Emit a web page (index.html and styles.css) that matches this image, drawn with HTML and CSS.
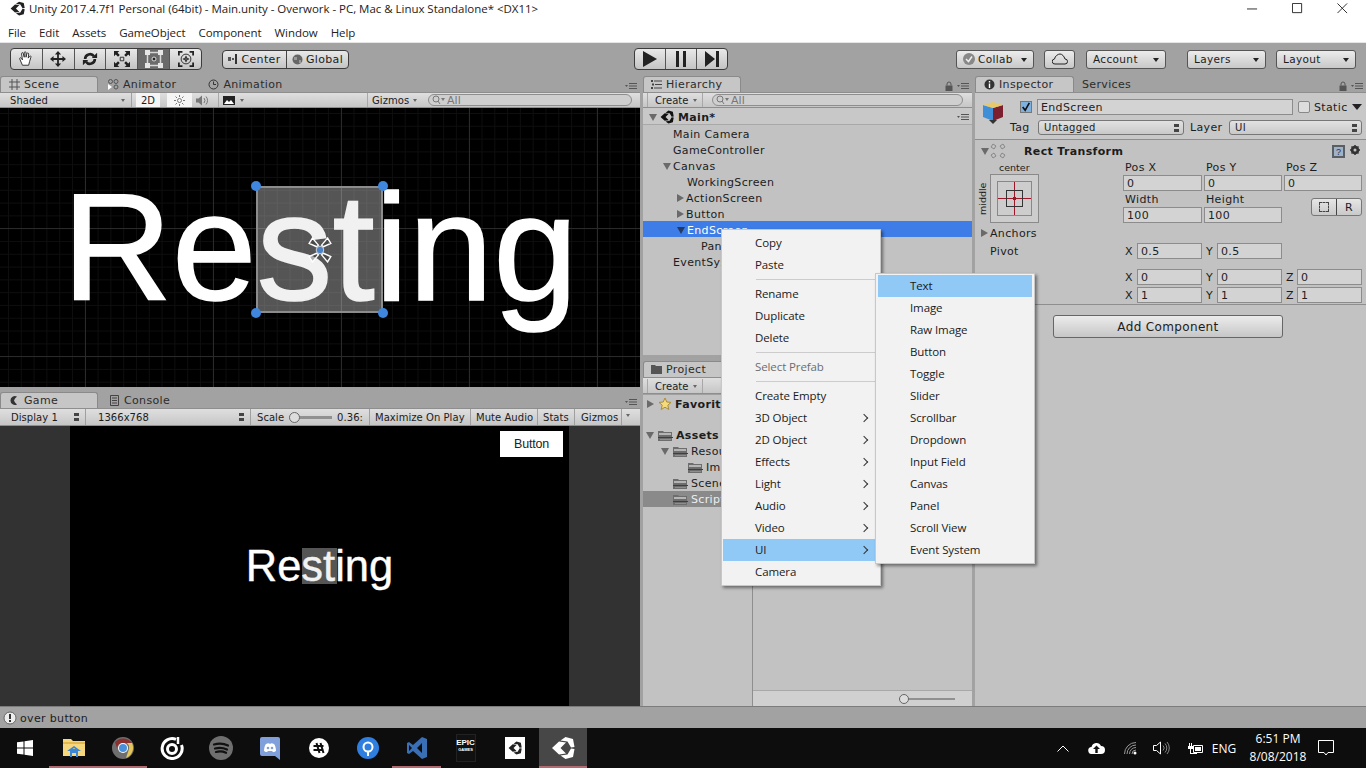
FILE: index.html
```html
<!DOCTYPE html>
<html lang="en">
<head>
<meta charset="utf-8">
<title>Unity</title>
<link rel="stylesheet" href="styles.css">
</head>
<body>
<svg class="defs" width="0" height="0" aria-hidden="true">
  <symbol id="unity" viewBox="0 0 24 24"><path fill="currentColor" d="M1 12 8 5.500 15 6.500 9.500 12 15 17.500 8 18.500ZM9.500 4.500 14.500 1 22 3 23.500 11 20 11.500 16.500 5.500ZM9.500 19.500 14.500 23 22 21 23.500 13 20 12.500 16.500 18.500Z"/></symbol>
  <symbol id="folder" viewBox="0 0 15 13"><path fill="#6d6d6d" d="M0 2h5l1 1h8v9H0z"/><path fill="#b5b5b5" d="M1 4h12v2H1z"/><path fill="#3f3f3f" d="M0 8h15v1H0z"/><path fill="#8e8e8e" d="M2 10h11v1H2z"/></symbol>
  <symbol id="menuopt" viewBox="0 0 12 8"><path fill="#555" d="M0 3h3L1.500 5zM4 1h8v1H4zM4 3.500h8v1H4zM4 6h8v1H4z"/></symbol>
  <symbol id="lock" viewBox="0 0 8 10"><path fill="none" stroke="#555" d="M2 4.500V3a2 2 0 0 1 4 0v1.500"/><path fill="#555" d="M.5 4.500h7V10h-7z"/></symbol>
  <symbol id="mag" viewBox="0 0 14 10"><circle cx="4" cy="4" r="3" fill="none" stroke="#777"/><path stroke="#777" d="M6 6l2 3"/><path fill="#777" d="M9 3h4l-2 3z"/></symbol>
</svg>

<div class="app">
  <header class="titlebar">
    <svg class="title-logo"><use href="#unity"/></svg>
    <span class="title-text">Unity 2017.4.7f1 Personal (64bit) - Main.unity - Overwork - PC, Mac &amp; Linux Standalone* &lt;DX11&gt;</span>
    <div class="winbtns">
      <svg viewBox="0 0 12 12"><path stroke="#222" d="M0 6.500h11"/></svg>
      <svg viewBox="0 0 12 12"><path fill="none" stroke="#222" d="M.5.500h10v10H.5z"/></svg>
      <svg viewBox="0 0 12 12"><path stroke="#222" d="M.5.500l10.500 10.500M11 .5L.5 11"/></svg>
    </div>
  </header>
  <nav class="menubar">
    <span>File</span><span>Edit</span><span>Assets</span><span>GameObject</span><span>Component</span><span>Window</span><span>Help</span>
  </nav>

  <div class="toolbar">
    <div class="btngroup tools">
      <button class="tool"><svg viewBox="0 0 18 18"><path fill="#fff" stroke="#222" d="M5 16 2 9c-.5-1.500 1-2 2-.5l1 1.500L4 3c0-1.500 2-1.500 2 0l1 4V2c0-1.500 2-1.500 2 0v5l1-4c.5-1.500 2-1 2 .5L11.500 8l1.500-2c1-1 2 0 1.500 1L13 12l-1 4z"/></svg></button>
      <button class="tool"><svg viewBox="0 0 18 18"><path fill="#222" d="M9 0l3.500 4H10v4h4V5.500L18 9l-4 3.500V10h-4v4h2.500L9 18l-3.500-4H8v-4H4v2.500L0 9l4-3.500V8h4V4H5.500z"/></svg></button>
      <button class="tool"><svg viewBox="0 0 18 18"><path fill="none" stroke="#222" stroke-width="3" d="M3.500 9a5.500 5.500 0 0 1 10-3M14.500 9a5.500 5.500 0 0 1-10 3"/><path fill="#222" d="M17 2v6h-6zM1 16v-6h6z"/></svg></button>
      <button class="tool"><svg viewBox="0 0 18 18"><path fill="#222" d="M0 0h6L4 2l2.500 2.500-2 2L2 4 0 6zM18 0v6l-2-2-2.500 2.500-2-2L14 2l-2-2zM0 18v-6l2 2 2.500-2.500 2 2L4 16l2 2zM18 18h-6l2-2-2.500-2.500 2-2L16 14l2-2z"/><path fill="none" stroke="#222" d="M7 7h4v4H7z"/></svg></button>
      <button class="tool is-on"><svg viewBox="0 0 18 18"><path fill="none" stroke="#d8d8d8" stroke-width="1.500" d="M2.500 2.500h13v13h-13z"/><path fill="#e6e6e6" d="M0 0h5v5H0zM13 0h5v5h-5zM0 13h5v5H0zM13 13h5v5h-5z"/><circle cx="9" cy="9" r="2" fill="#222" stroke="#ddd"/></svg></button>
      <button class="tool"><svg viewBox="0 0 18 18"><path fill="none" stroke="#222" stroke-width="2" d="M1 5V1h4M13 1h4v4M17 13v4h-4M5 17H1v-4"/><circle cx="9" cy="9" r="5.500" fill="none" stroke="#222"/><path fill="#222" d="M9 5l1.500 2.500h-1v1h1v-1L13 9l-2.500 1.500v-1h-1v1h1L9 13l-1.500-2.500h1v-1h-1v1L5 9l2.500-1.500v1h1v-1h-1z"/></svg></button>
    </div>
    <div class="btngroup pivot">
      <button class="seg seg-center"><svg class="ic9" viewBox="0 0 10 10"><path fill="#555" d="M0 3h3v4H0zM4 4h2v2H4z"/><path fill="#333" d="M7 0h2v10H7z"/></svg>Center</button>
      <button class="seg"><svg class="ic11" viewBox="0 0 11 11"><circle cx="5.500" cy="5.500" r="5" fill="#666"/><path fill="#999" d="M2 3h3v3H2zM7 6h2v3H7z"/></svg>Global</button>
    </div>
    <div class="btngroup play">
      <button class="pl"><svg viewBox="0 0 14 16"><path fill="#222" d="M0 0l14 8-14 8z"/></svg></button>
      <button class="pl"><svg viewBox="0 0 14 16"><path fill="#222" d="M2 0h3v16H2zM9 0h3v16H9z"/></svg></button>
      <button class="pl"><svg viewBox="0 0 14 16"><path fill="#222" d="M0 0l10 8-10 8zM11 0h3v16h-3z"/></svg></button>
    </div>
    <button class="dd collab"><svg class="ic12" viewBox="0 0 12 12"><circle cx="6" cy="6" r="6" fill="#888"/><path fill="none" stroke="#eee" stroke-width="1.500" d="M3 6l2.500 2.500L9 3.500"/></svg><span>Collab</span><i class="tri"></i></button>
    <button class="dd cloud"><svg viewBox="0 0 16 12"><path fill="none" stroke="#222" d="M4 11H3a2.500 2.500 0 0 1-.5-5C3 3 6 1 8 1s4 2 5 5a2.500 2.500 0 0 1 0 5z"/></svg></button>
    <button class="dd account"><span>Account</span><i class="tri"></i></button>
    <button class="dd layers"><span>Layers</span><i class="tri"></i></button>
    <button class="dd layout"><span>Layout</span><i class="tri"></i></button>
  </div>

  <main class="dock">
    <section class="col col-left">
      <div class="pane pane-scene">
        <div class="tabs">
          <div class="tab tab-on tab-scene"><svg class="ic11" viewBox="0 0 11 11"><path stroke="#555" d="M3 0v11M8 0v11M0 3h11M0 8h11"/></svg>Scene</div>
          <div class="tab tab-animator"><svg class="ic11" viewBox="0 0 11 11"><circle cx="2.500" cy="2.500" r="2" fill="none" stroke="#555"/><circle cx="8" cy="2.500" r="2" fill="none" stroke="#555"/><circle cx="8" cy="8" r="2" fill="none" stroke="#555"/><path fill="#fff" d="M0 5l4 3-4 3z"/></svg>Animator</div>
          <div class="tab tab-animation"><svg class="ic11" viewBox="0 0 11 11"><circle cx="5.500" cy="5.500" r="4.500" fill="none" stroke="#333"/><path fill="none" stroke="#333" d="M5.500 2.500v3h2.500"/></svg>Animation</div>
          <svg class="menuopt"><use href="#menuopt"/></svg>
        </div>
        <div class="bar">
          <div class="b b-shaded"><span>Shaded</span><i class="tri small"></i></div>
          <div class="b b-2d">2D</div>
          <div class="b b-sun"><svg viewBox="0 0 11 11"><circle cx="5.500" cy="5.500" r="2" fill="none" stroke="#777"/><path stroke="#777" d="M5.500 0v2M5.500 9v2M0 5.500h2M9 5.500h2M1.500 1.500l1.500 1.500M8 8l1.500 1.500M1.500 9.500L3 8M8 3l1.500-1.500"/></svg></div>
          <div class="b b-snd"><svg viewBox="0 0 14 11"><path fill="#777" d="M0 3.500h2.500L6 .5v10l-3.500-3H0z"/><path fill="none" stroke="#777" d="M8 3a4 4 0 0 1 0 5M10 1.500a6 6 0 0 1 0 8"/></svg></div>
          <div class="b b-img"><svg viewBox="0 0 12 9"><path fill="#222" d="M0 0h12v9H0z"/><path fill="#fff" d="M1 8l3-4 2 2 2-2 3 4z"/></svg><i class="tri small"></i></div>
          <div class="b b-giz"><span>Gizmos</span><i class="tri small"></i></div>
          <div class="search s-scene"><svg><use href="#mag"/></svg><span>All</span></div>
        </div>
        <div class="view scene-view">
          <div class="scene-text">Resting</div>
          <div class="sel-rect">
            <i class="dot d-tl"></i><i class="dot d-tr"></i><i class="dot d-bl"></i><i class="dot d-br"></i>
            <svg class="anchor-gizmo" viewBox="0 0 24 24"><g fill="#333" fill-opacity=".35" stroke="#fff" stroke-width="1.300"><path d="M9 9 2 6 5 1 10.500 7.500zM15 9l7-3-3-5-5.500 6.500zM9 15l-7 3 3 5 5.500-6.500zM15 15l7 3-3 5-5.500-6.500z"/></g><circle cx="12" cy="12" r="3.500" fill="#4a8fe0" fill-opacity=".8" stroke="#ddd" stroke-width=".8"/></svg>
          </div>
        </div>
      </div>
      <div class="pane pane-game">
        <div class="tabs">
          <div class="tab tab-on tab-game"><svg class="ic11" viewBox="0 0 11 11"><path fill="#333" d="M8 1.500A4.500 4.500 0 1 0 8 9.500L6 7.500 5 5.500 6 3.500z"/></svg>Game</div>
          <div class="tab tab-console"><svg class="ic11" viewBox="0 0 11 11"><path fill="none" stroke="#444" d="M1.500.5h8v10h-8z"/><path stroke="#444" d="M3 3h5M3 5.500h5M3 8h5"/></svg>Console</div>
          <svg class="menuopt"><use href="#menuopt"/></svg>
        </div>
        <div class="bar bar-game">
          <div class="b g-display"><span>Display 1</span><i class="updn"></i></div>
          <div class="b g-res"><span>1366x768</span><i class="updn"></i></div>
          <div class="b g-scale"><span>Scale</span><i class="slider"><i class="knob"></i></i><span>0.36:</span></div>
          <div class="b g-max">Maximize On Play</div>
          <div class="b g-mute">Mute Audio</div>
          <div class="b g-stats">Stats</div>
          <div class="b g-giz">Gizmos</div>
          <div class="b g-giz2"><i class="tri small"></i></div>
        </div>
        <div class="view game-view">
          <div class="game-stage">
            <div class="game-btn">Button</div>
            <div class="game-text">Resting</div>
            <div class="game-sel"></div>
          </div>
        </div>
      </div>
    </section>

    <section class="col col-mid">
      <div class="pane pane-hier">
        <div class="tabs">
          <div class="tab tab-on tab-hier"><svg class="ic11" viewBox="0 0 11 11"><path stroke="#444" d="M3 2h8M4 5.500h7M3 9h8"/><path fill="#444" d="M0 1h2v2H0zM1 4.500h2v2H1zM0 8h2v2H0z"/></svg>Hierarchy</div>
          <svg class="lock"><use href="#lock"/></svg>
          <svg class="menuopt mo-near"><use href="#menuopt"/></svg>
        </div>
        <div class="bar bar-mid">
          <div class="b b-create"><span>Create</span><i class="tri small"></i></div>
          <div class="search s-hier"><svg><use href="#mag"/></svg><span>All</span></div>
        </div>
        <div class="tree">
          <div class="row row-scene"><i class="arr down"></i><svg class="ic-unity"><use href="#unity"/></svg><b>Main*</b><svg class="menuopt mo-row"><use href="#menuopt"/></svg></div>
          <div class="row d1">Main Camera</div>
          <div class="row d1">GameController</div>
          <div class="row d1 has"><i class="arr down"></i>Canvas</div>
          <div class="row d2">WorkingScreen</div>
          <div class="row d2 has"><i class="arr right"></i>ActionScreen</div>
          <div class="row d2 has"><i class="arr right"></i>Button</div>
          <div class="row d2 has is-sel"><i class="arr down"></i>EndScreen</div>
          <div class="row d3">Panel</div>
          <div class="row d1">EventSystem</div>
        </div>
      </div>
      <div class="pane pane-proj">
        <div class="tabs">
          <div class="tab tab-on tab-proj"><svg class="ic11" viewBox="0 0 11 11"><path fill="#555" d="M0 1h4l1 1h6v8H0z"/></svg>Project</div>
        </div>
        <div class="bar bar-mid bar-proj">
          <div class="b b-create"><span>Create</span><i class="tri small"></i></div>
        </div>
        <div class="proj-body">
          <div class="proj-tree">
            <div class="prow p-fav"><i class="arr right"></i><svg class="star" viewBox="0 0 14 14"><path fill="#f5d97a" stroke="#a88d3a" d="M7 1l1.800 4 4.200.4-3.200 2.800 1 4.300L7 10.200 3.200 12.500l1-4.300L1 5.400 5.200 5z"/></svg><b>Favorites</b></div>
            <div class="prow p-assets"><i class="arr down"></i><svg class="fld"><use href="#folder"/></svg><b>Assets</b></div>
            <div class="prow p2"><i class="arr down"></i><svg class="fld"><use href="#folder"/></svg>Resources</div>
            <div class="prow p3"><svg class="fld"><use href="#folder"/></svg>Images</div>
            <div class="prow p2b"><svg class="fld"><use href="#folder"/></svg>Scenes</div>
            <div class="prow p2b is-gray"><svg class="fld"><use href="#folder"/></svg>Scripts</div>
          </div>
          <div class="proj-main">
            <div class="proj-foot"><i class="slider foot-slider"><i class="knob"></i></i></div>
          </div>
        </div>
      </div>
    </section>

    <section class="col col-right">
      <div class="tabs">
        <div class="tab tab-on tab-insp"><svg class="ic11" viewBox="0 0 11 11"><circle cx="5.500" cy="5.500" r="5" fill="#333"/><path fill="#fff" d="M4.800 2h1.400v1.500H4.800zM4.800 4.500h1.400V9H4.800z"/></svg>Inspector</div>
        <div class="tab tab-serv">Services</div>
        <svg class="lock"><use href="#lock"/></svg>
        <svg class="menuopt mo-near"><use href="#menuopt"/></svg>
      </div>
      <div class="insp">
        <div class="ihead">
          <svg class="cube" viewBox="0 0 22 24"><path fill="#3f8fd8" d="M1 5l10 3v13L1 17z"/><path fill="#7c1f2e" d="M11 8l10-3v12l-10 4z"/><path fill="#e6c96a" d="M1 5l10-3 10 3-10 3z"/><path fill="#333" d="M7 20h8l-4 4z"/></svg>
          <div class="ihead-rows">
            <div class="irow1">
              <span class="check"><svg viewBox="0 0 12 12"><path fill="none" stroke="#111" stroke-width="2" d="M2 6l3 4 5-9"/></svg></span>
              <div class="field name-field">EndScreen</div>
              <span class="box"></span><span class="static">Static</span><i class="tri big"></i>
            </div>
            <div class="irow2">
              <span class="lbl tag-lbl">Tag</span>
              <div class="sel tag-sel"><span>Untagged</span><i class="updn"></i></div>
              <span class="lbl layer-lbl">Layer</span>
              <div class="sel layer-sel"><span>UI</span><i class="updn"></i></div>
            </div>
          </div>
        </div>
        <div class="comp-head">
          <i class="arr down"></i>
          <svg class="rt-ic" viewBox="0 0 16 16"><path fill="none" stroke="#888" d="M1 4l2-3 3 2-2 3zM15 4l-2-3-3 2 2 3zM1 12l2 3 3-2-2-3zM15 12l-2 3-3-2 2-3z"/></svg>
          <b>Rect Transform</b>
          <svg class="help" viewBox="0 0 13 13"><path fill="#5a5f66" d="M0 0h13v13H0z"/><path fill="#9fb2c8" d="M2 2h9v9H2z"/><text x="4" y="10" font-size="9" fill="#234" font-family="Liberation Sans">?</text></svg>
          <svg class="gear" viewBox="0 0 12 12"><circle cx="5" cy="5" r="3" fill="none" stroke="#333" stroke-width="2.500"/><path stroke="#333" stroke-width="1.500" d="M5 0v10M0 5h10M1.500 1.500l7 7M8.500 1.500l-7 7"/><circle cx="5" cy="5" r="1.500" fill="#c2c2c2"/></svg>
        </div>
        <div class="xf">
          <div class="xf-center">center</div>
          <div class="xf-anchor">
            <span class="vert">middle</span>
            <div class="anchor-box"><div class="anchor-in"><i class="ah"></i><i class="av"></i><i class="ac"></i><i class="ad"></i></div></div>
          </div>
          <span class="cap c2 r1">Pos X</span><span class="cap c3 r1">Pos Y</span><span class="cap c4 r1">Pos Z</span>
          <div class="field c2 r2">0</div><div class="field c3 r2">0</div><div class="field c4 r2">0</div>
          <span class="cap c2 r3">Width</span><span class="cap c3 r3">Height</span>
          <div class="field c2 r4">100</div><div class="field c3 r4">100</div>
          <div class="rbtns c4 r34"><span class="rb"><i class="dash"></i></span><span class="rb">R</span></div>
          <div class="xf-left r5"><i class="arr right"></i>Anchors</div>
          <div class="xf-left lbl-pivot r6">Pivot</div>
          <div class="lf c2 r6"><span>X</span><div class="field">0.5</div></div>
          <div class="lf c3 r6"><span>Y</span><div class="field">0.5</div></div>
          <div class="lf c2 r8"><span>X</span><div class="field">0</div></div>
          <div class="lf c3 r8"><span>Y</span><div class="field">0</div></div>
          <div class="lf c4 r8"><span>Z</span><div class="field">0</div></div>
          <div class="lf c2 r10"><span>X</span><div class="field">1</div></div>
          <div class="lf c3 r10"><span>Y</span><div class="field">1</div></div>
          <div class="lf c4 r10"><span>Z</span><div class="field">1</div></div>
        </div>
        <div class="add-wrap"><button class="add">Add Component</button></div>
      </div>
    </section>
  </main>

  <footer class="status">
    <svg class="warn" viewBox="0 0 14 14"><circle cx="7" cy="7" r="6" fill="#eee" stroke="#666"/><path fill="#333" d="M6 3h2v5H6zM6 9h2v2H6z"/></svg>
    <span>over button</span>
  </footer>

  <div class="taskbar">
    <div class="tb"><svg class="i16" viewBox="0 0 16 16"><path fill="#fff" d="M0 2.300 6.500 1.400V7.500H0zM7.500 1.300 16 0V7.500H7.500zM0 8.500H6.500V14.600L0 13.700zM7.500 8.500H16V16L7.500 14.700z"/></svg></div>
    <div class="tb tb-run"><svg class="i22" viewBox="0 0 22 22"><path fill="#f6d77c" d="M0 2h8l2 2h12v15H0z"/><path fill="#e3b94e" d="M0 5h22v2H0z"/><path fill="#3b87d6" d="M7 12h8v8h-2v-4H9v4H7zM4 14l7-5 7 5h-3l-4-3-4 3z"/></svg></div>
    <div class="tb tb-run"><svg class="i22" viewBox="0 0 22 22"><circle cx="11" cy="11" r="11" fill="#6e6e6e"/><path fill="#8c2f2f" d="M3 5a11 11 0 0 1 17 1H11A6 6 0 0 0 5 11z"/><path fill="#e5c65a" d="M20 6a11 11 0 0 1-6 15l3-9a6 6 0 0 0-2-6z"/><circle cx="11" cy="11" r="5" fill="#fff"/><circle cx="11" cy="11" r="4" fill="#4a8fdc"/></svg></div>
    <div class="tb"><svg class="i24" viewBox="0 0 24 24"><path fill="none" stroke="#fff" stroke-width="3" d="M16 3.300A10 10 0 1 0 21.500 9"/><circle cx="12" cy="13" r="4.500" fill="none" stroke="#fff" stroke-width="3"/><path stroke="#fff" stroke-width="2.500" d="M18 1v7"/></svg></div>
    <div class="tb"><svg class="i24" viewBox="0 0 24 24"><circle cx="12" cy="12" r="12" fill="#6f6f6f"/><path fill="none" stroke="#111" stroke-width="2.200" stroke-linecap="round" d="M5 8.500c5-1.500 10-1 14 1M6 12.500c4-1 8-.8 12 1M7 16c3-.8 7-.6 10 .8"/></svg></div>
    <div class="tb"><svg class="i24" viewBox="0 0 20 24"><path fill="#7fa0da" d="M2 1h16a2 2 0 0 1 2 2v21l-5-4H2a2 2 0 0 1-2-2V3a2 2 0 0 1 2-2z"/><path fill="#fff" d="M4 15c0-3 1-6 2-7 2-1 3-1 4 0 1-1 2-1 4 0 1 1 2 4 2 7-1 1-3 1-3 1l-1-1H8l-1 1s-2 0-3-1z"/><circle cx="8" cy="12" r="1.300" fill="#7fa0da"/><circle cx="12" cy="12" r="1.300" fill="#7fa0da"/></svg></div>
    <div class="tb"><svg class="i20" viewBox="0 0 20 20"><circle cx="10" cy="10" r="10" fill="#fff"/><path fill="none" stroke="#111" stroke-width="2" d="M8 5l3 10M12 5l3 10M5 8h10M5 12h10" transform="translate(-.500 0)"/></svg></div>
    <div class="tb"><svg class="i22" viewBox="0 0 22 22"><circle cx="11" cy="11" r="11" fill="#2f7fe0"/><circle cx="11" cy="10" r="4.500" fill="none" stroke="#fff" stroke-width="2"/><path stroke="#fff" stroke-width="2" d="M11 14v5"/></svg></div>
    <div class="tb tb-run"><svg class="i24" viewBox="0 0 24 24"><path fill="#3a6fb5" d="M17 1l5 2v18l-5 2-9-8-4 3-2-1V7l2-1 4 3zM17 7l-5 5 5 5zM4 9v6l3-3z"/></svg></div>
    <div class="tb"><div class="epic"><span>EPIC</span><small>GAMES</small></div></div>
    <div class="tb"><div class="ubox"><svg><use href="#unity"/></svg></div></div>
    <div class="tb tb-sel"><svg class="i24 white"><use href="#unity"/></svg></div>
    <div class="tray">
      <svg class="t-caret" viewBox="0 0 12 7"><path fill="none" stroke="#fff" d="M.5 6.500 6 1l5.500 5.500"/></svg>
      <svg class="t-cloud" viewBox="0 0 17 12"><path fill="#fff" d="M4 12a3.500 3.500 0 0 1-.5-7A5 5 0 0 1 13 4a4 4 0 0 1 0 8z"/><path fill="#111" d="M8.500 3.500 12 7H9.700v4H7.300V7H5z"/></svg>
      <svg class="t-wifi" viewBox="0 0 13 13"><path fill="none" stroke="#999" d="M.5 12a11.500 11.500 0 0 1 11.500-11.500M3 12a9 9 0 0 1 9-9M5.500 12a6.500 6.500 0 0 1 6.500-6.500M8 12a4 4 0 0 1 4-4"/><circle cx="11" cy="11" r="1.500" fill="#fff"/></svg>
      <svg class="t-vol" viewBox="0 0 17 14"><path fill="none" stroke="#fff" d="M.5 4.500h3l4-3.500v12l-4-3.500h-3z"/><path fill="none" stroke="#888" d="M10 4.500a3.500 3.500 0 0 1 0 5M12 2.500a6.500 6.500 0 0 1 0 9M14 1a9 9 0 0 1 0 12"/></svg>
      <svg class="t-bat" viewBox="0 0 16 11"><path fill="#fff" d="M0 3h1V0h1v3h1V0h1v3h1v3H3v4h6v1H2V6H0z"/><path fill="none" stroke="#fff" d="M5.500 2.500h9v7h-9z"/><path fill="#fff" d="M7 4h6v4H7z"/></svg>
      <span class="t-eng">ENG</span>
      <div class="t-clock"><span>6:51 PM</span><span>8/08/2018</span></div>
      <svg class="t-note" viewBox="0 0 16 16"><path fill="none" stroke="#fff" d="M.5.500h15v12H10l-2 2.500-2-2.500H.5z"/></svg>
    </div>
  </div>

  <div class="menu ctx">
    <div class="mi">Copy</div><div class="mi">Paste</div>
    <hr>
    <div class="mi">Rename</div><div class="mi">Duplicate</div><div class="mi">Delete</div>
    <hr>
    <div class="mi dis">Select Prefab</div>
    <hr>
    <div class="mi">Create Empty</div>
    <div class="mi sub">3D Object</div><div class="mi sub">2D Object</div><div class="mi sub">Effects</div><div class="mi sub">Light</div><div class="mi sub">Audio</div><div class="mi sub">Video</div>
    <div class="mi sub hl">UI</div>
    <div class="mi">Camera</div>
  </div>
  <div class="menu submenu">
    <div class="mi hl">Text</div><div class="mi">Image</div><div class="mi">Raw Image</div><div class="mi">Button</div><div class="mi">Toggle</div><div class="mi">Slider</div><div class="mi">Scrollbar</div><div class="mi">Dropdown</div><div class="mi">Input Field</div><div class="mi">Canvas</div><div class="mi">Panel</div><div class="mi">Scroll View</div><div class="mi">Event System</div>
  </div>
</div>
</body>
</html>
```

FILE: styles.css
```css
* { box-sizing: border-box; }
html, body { margin: 0; padding: 0; }
body { width: 1366px; height: 768px; overflow: hidden; background: #a2a2a2; font-family: "DejaVu Sans", sans-serif; font-size: 10.5px; letter-spacing: .35px; color: #1c1c1c; }
.defs { position: absolute; }
button { font: inherit; letter-spacing: inherit; color: inherit; padding: 0; margin: 0; }
.app { position: relative; width: 1366px; height: 768px; display: flex; flex-direction: column; }

.titlebar { height: 22px; background: #fff; display: flex; align-items: center; padding: 0 0 6px 10px; font-family: "Open Sans", sans-serif; font-size: 11.5px; letter-spacing: -.03px; color: #222; }
.title-logo { width: 15px; height: 15px; color: #222; margin-right: 4px; }
.title-text { white-space: nowrap; }
.winbtns { margin-left: auto; display: flex; gap: 34px; padding-right: 18px; }
.winbtns svg { width: 11px; height: 11px; }

.menubar { height: 20px; background: #fff; display: flex; gap: 13px; align-items: center; padding: 1px 0 1px 8px; font-family: "Open Sans", sans-serif; font-size: 11.5px; letter-spacing: -.05px; color: #222; }

.toolbar { height: 34px; background: #a2a2a2; border-top: 1px solid #e6e6e6; display: flex; align-items: flex-start; padding: 5px 0 0 10px; }
.btngroup { display: flex; border: 1px solid #3c3c3c; border-radius: 4px; overflow: hidden; background: linear-gradient(#e9e9e9, #c4c4c4); }
.tools { width: 192px; height: 22px; }
.tool { flex: 1; border: 0; border-right: 1px solid #555; background: transparent; display: flex; align-items: center; justify-content: center; }
.tool:last-child { border-right: 0; }
.tool svg { width: 16px; height: 16px; }
.tool.is-on { background: #6b6b6b; }
.tool.is-on svg { width: 18px; height: 18px; }
.pivot { width: 127px; height: 19px; margin: 2px 0 0 20px; }
.seg { flex: 1; border: 0; background: transparent; display: flex; align-items: center; justify-content: center; gap: 3px; font-size: 11px; padding-bottom: 1px; }
.seg-center { flex: 0 0 64px; border-right: 1px solid #444; }
.ic9 { width: 10px; height: 10px; }
.ic11 { width: 11px; height: 11px; flex: none; }
.ic12 { width: 12px; height: 12px; }
.play { width: 94px; height: 22px; margin-left: 285px; }
.pl { flex: 1; border: 0; border-right: 1px solid #555; background: transparent; display: flex; align-items: center; justify-content: center; }
.pl:last-child { border-right: 0; }
.pl svg { width: 14px; height: 16px; }
.dd { height: 19px; margin-top: 2px; border: 1px solid #555; border-radius: 3px; background: linear-gradient(#ececec, #c8c8c8); display: flex; align-items: center; padding: 0 6px 2px; font-size: 10.5px; }
.dd .tri { margin-left: auto; margin-top: 2px; }
.collab { width: 78px; margin-left: 228px; gap: 3px; }
.cloud { width: 31px; margin-left: 10px; justify-content: center; }
.cloud svg { width: 16px; height: 12px; }
.account { width: 80px; margin-left: 11px; }
.layers { width: 79px; margin-left: 21px; }
.layout { width: 80px; margin-left: 10px; }
.tri { display: inline-block; width: 0; height: 0; border-left: 3px solid transparent; border-right: 3px solid transparent; border-top: 4px solid #222; }
.tri.small { border-left-width: 2px; border-right-width: 2px; border-top: 3px solid #666; }
.tri.big { border-left-width: 5px; border-right-width: 5px; border-top: 6px solid #222; }

.dock { flex: none; height: 630px; display: grid; grid-template-columns: 640px 330px 392px; column-gap: 2px; }
.col { display: flex; flex-direction: column; min-width: 0; }
.col-left { gap: 5px; }
.col-mid { gap: 6px; padding-left: 1px; }
.pane { display: flex; flex-direction: column; min-height: 0; }
.pane-scene { height: 311px; }
.pane-game { flex: 1; }
.pane-hier { height: 279px; }
.pane-proj { flex: 1; }

.tabs { height: 16px; flex: none; display: flex; align-items: flex-end; position: relative; font-size: 11px; }
.tab { height: 16px; display: flex; align-items: center; gap: 4px; white-space: nowrap; color: #2c2c2c; }
.tab-on { background: #c6c6c6; border-radius: 3px 3px 0 0; border: 1px solid #8a8a8a; border-bottom: 0; }
.tab-scene { width: 98px; padding-left: 8px; }
.tab-animator { margin-left: 10px; }
.tab-animation { margin-left: 32px; }
.tab-game { width: 98px; padding-left: 8px; }
.tab-console { margin-left: 11px; }
.tab-hier { width: 98px; padding-left: 7px; }
.tab-proj { width: 98px; padding-left: 7px; }
.tab-insp { width: 99px; padding-left: 8px; }
.tab-serv { margin-left: 8px; }
.menuopt { width: 12px; height: 8px; margin: 0 3px 2px auto; }
.lock { width: 8px; height: 10px; margin: 0 0 1px auto; }
.mo-near { margin-left: 4px; }
.mo-row { margin: 0 3px 0 auto; }

.bar { height: 16px; flex: none; display: flex; align-items: stretch; background: linear-gradient(#dfdfdf, #c6c6c6); border-top: 1px solid #8e8e8e; border-bottom: 1px solid #8e8e8e; font-size: 10px; letter-spacing: .05px; }
.bar-game { height: 18px; }
.bar-proj { height: 17px; padding-top: 1px; }
.b { display: flex; align-items: center; white-space: nowrap; flex: none; padding: 0 6px; }
.b-shaded { width: 128px; margin-left: 4px; border-right: 1px solid #a0a0a0; justify-content: space-between; }
.b-2d { width: 24px; margin-left: 4px; background: #f5f5f5; justify-content: center; padding: 0; }
.b-sun { width: 25px; margin-left: 7px; background: #f5f5f5; justify-content: center; padding: 0; }
.b-sun svg { width: 11px; height: 11px; }
.b-snd { width: 26px; padding: 0 0 0 4px; }
.b-snd svg { width: 14px; height: 11px; }
.b-img { width: 34px; gap: 5px; margin-left: 0; padding: 0 0 0 4px; border-left: 1px solid #a8a8a8; }
.b-img svg { width: 12px; height: 9px; }
.b-giz { width: 44px; margin-left: 115px; padding: 0 0 0 4px; gap: 4px; border-left: 1px solid #a8a8a8; }
.search { display: flex; align-items: center; background: #cfcfcf; border: 1px solid #8e8e8e; border-radius: 7px; height: 12px; margin-top: 1px; font-size: 11px; color: #777; padding-left: 3px; gap: 1px; }
.search svg { width: 14px; height: 10px; }
.s-scene { width: 204px; margin-left: 17px; }
.s-hier { width: 251px; margin-left: 9px; }
.g-display { width: 81px; margin-left: 5px; justify-content: space-between; border-right: 1px solid #9f9f9f; }
.g-res { width: 165px; padding-left: 12px; justify-content: space-between; border-right: 1px solid #9f9f9f; }
.g-scale { width: 119px; gap: 5px; border-right: 1px solid #9f9f9f; }
.g-max { width: 101px; padding: 0 0 0 5px; border-right: 1px solid #9f9f9f; }
.g-mute { width: 67px; padding: 0 0 0 5px; border-right: 1px solid #9f9f9f; }
.g-stats { width: 37px; padding: 0 0 0 5px; border-right: 1px solid #9f9f9f; }
.g-giz { width: 47px; padding: 0 0 0 6px; border-right: 1px solid #9f9f9f; }
.g-giz2 { width: 14px; padding: 0 0 4px 4px; }
.updn { display: inline-block; width: 5px; height: 8px; background: linear-gradient(#444 0 3px, transparent 3px 5px, #444 5px 8px); }
.slider { display: block; width: 43px; height: 3px; background: #909090; position: relative; }
.knob { position: absolute; left: 0; top: -4px; width: 11px; height: 11px; border-radius: 50%; background: #ddd; border: 1px solid #666; }

.view { flex: 1; min-height: 0; overflow: hidden; }
.scene-view { position: relative; background-color: #000;
  background-image:
    linear-gradient(90deg, #2a2a2a 1px, transparent 1px),
    linear-gradient(#2a2a2a 1px, transparent 1px),
    linear-gradient(90deg, #0e0e0e 1px, transparent 1px),
    linear-gradient(#0e0e0e 1px, transparent 1px);
  background-size: 128px 128px, 128px 128px, 12.8px 12.8px, 12.8px 12.8px;
  background-position: 85px 0, 0 120px, 8px 0, 0 5px;
  display: flex; align-items: center; justify-content: center; }
.scene-text { font-family: "Liberation Sans", sans-serif; font-size: 152px; letter-spacing: 0; line-height: 1; color: #fff; padding-bottom: 2px; -webkit-text-stroke: 1.5px #fff; }
.sel-rect { position: absolute; left: 256px; top: 78px; width: 127px; height: 127px; background: rgba(218,218,218,.39); border: 2px solid #8c8c8c; }
.dot { position: absolute; width: 10px; height: 10px; border-radius: 50%; background: #3f86de; }
.d-tl { left: -7px; top: -7px; } .d-tr { right: -7px; top: -7px; } .d-bl { left: -7px; bottom: -7px; } .d-br { right: -7px; bottom: -7px; }
.anchor-gizmo { position: absolute; left: 49px; top: 49px; width: 26px; height: 26px; }
.game-view { background: #323232; padding: 0 70px; }
.game-stage { position: relative; width: 499px; height: 100%; background: #000; display: flex; align-items: center; justify-content: center; }
.game-btn { position: absolute; right: 6px; top: 5px; width: 63px; height: 26px; background: #fff; color: #222; display: flex; align-items: center; justify-content: center; font-family: "Liberation Sans", sans-serif; font-size: 12.5px; letter-spacing: -.2px; }
.game-text { font-family: "Liberation Sans", sans-serif; font-size: 43.5px; letter-spacing: 0; line-height: 1; color: #fff; padding-top: 1px; -webkit-text-stroke: .4px #fff; }
.game-sel { position: absolute; left: 232px; top: 122px; width: 35px; height: 36px; background: rgba(218,218,218,.39); }

.bar-mid { font-size: 10px; }
.b-create { width: 56px; margin-left: 4px; gap: 4px; padding: 0 0 0 7px; border-left: 1px solid #a8a8a8; border-right: 1px solid #a8a8a8; }
.tree { flex: 1; background: #c2c2c2; font-size: 11px; }
.row { height: 16px; display: flex; align-items: center; white-space: nowrap; padding-top: 2px; }
.row-scene { height: 17px; background: #c8c8c8; border-bottom: 1px solid #a8a8a8; padding: 2px 0 0 6px; font-size: 11px; gap: 3px; }
.row-scene b { font-weight: 700; }
.ic-unity { width: 14px; height: 14px; color: #111; margin-right: 1px; }
.d1 { padding-left: 30px; }
.d2 { padding-left: 44px; }
.d3 { padding-left: 58px; }
.has .arr { margin-left: -10px; margin-right: 2px; }
.arr { display: inline-block; flex: none; width: 0; height: 0; }
.arr.down { border-left: 4px solid transparent; border-right: 4px solid transparent; border-top: 7px solid #6a6a6a; }
.arr.right { border-top: 4px solid transparent; border-bottom: 4px solid transparent; border-left: 7px solid #6a6a6a; }
.is-sel { background: #3e7de7; color: #fff; }
.is-sel .arr.down { border-top-color: #223a66; }

.proj-body { flex: 1; display: flex; background: #c2c2c2; min-height: 0; border-top: 1px solid #a0a0a0; }
.proj-tree { width: 110px; border-right: 1px solid #8e8e8e; padding-top: 1px; font-size: 11px; flex: none; }
.prow { height: 16px; display: flex; align-items: center; gap: 3px; white-space: nowrap; }
.prow i { margin-right: 1px; }
.p-fav { padding-left: 4px; margin-bottom: 15px; }
.p-assets { padding-left: 3px; }
.p2 { padding-left: 18px; }
.p3 { padding-left: 45px; }
.p2b { padding-left: 30px; }
.star { width: 14px; height: 14px; }
.fld { width: 15px; height: 13px; flex: none; }
.is-gray { background: #8a8a8a; color: #eee; }
.proj-main { flex: 1; display: flex; flex-direction: column; justify-content: flex-end; }
.proj-foot { height: 16px; background: #d0d0d0; border-top: 1px solid #a8a8a8; display: flex; align-items: center; padding-left: 146px; }
.foot-slider { width: 56px; height: 2px; }
.foot-slider .knob { top: -4px; width: 10px; height: 10px; }

.col-right { padding-left: 1px; }
.insp { flex: 1; background: #c2c2c2; font-size: 11px; }
.ihead { height: 48px; border-bottom: 1px solid #8e8e8e; display: flex; padding: 6px 0 0 7px; border-top: 1px solid #8e8e8e; background: #c8c8c8; }
.cube { width: 22px; height: 24px; flex: none; margin-top: 1px; }
.ihead-rows { flex: 1; display: flex; flex-direction: column; gap: 5px; }
.irow1 { display: flex; align-items: center; height: 16px; }
.check { width: 12px; height: 12px; margin-left: 16px; background: #7fb1e0; border: 1px solid #777; display: flex; }
.check svg { width: 10px; height: 10px; }
.name-field { width: 256px; margin-left: 5px; }
.field { height: 16px; background: #d3d3d3; border: 1px solid #8c8c8c; display: flex; align-items: center; padding-left: 3px; white-space: nowrap; min-width: 0; color: #222; }
.box { width: 12px; height: 12px; background: #ddd; border: 1px solid #888; border-radius: 2px; margin-left: 5px; }
.static { margin-left: 4px; }
.irow1 .tri.big { margin-left: 4px; }
.irow2 { display: flex; align-items: center; height: 15px; }
.lbl { flex: none; }
.tag-lbl { margin-left: 6px; width: 28px; }
.sel { height: 15px; border: 1px solid #777; border-radius: 3px; background: linear-gradient(#e2e2e2, #c9c9c9); display: flex; align-items: center; justify-content: space-between; padding: 0 4px 0 5px; font-size: 10px; }
.tag-sel { width: 146px; }
.layer-lbl { margin-left: 6px; width: 39px; }
.layer-sel { width: 133px; }
.comp-head { height: 20px; display: flex; align-items: center; padding: 2px 0 0 6px; }
.rt-ic { width: 16px; height: 16px; margin-left: 1px; }
.comp-head b { margin-left: 18px; font-weight: 700; }
.help { width: 13px; height: 13px; margin-left: auto; }
.gear { width: 12px; height: 12px; margin: 0 4px 0 5px; }
.xf { display: grid; grid-template-columns: 146px 79px 78px 78px; grid-template-rows: 15px 16px 16px 16px 20px 16px 10px 16px 2px 16px; column-gap: 2px; height: 145px; border-bottom: 1px solid #8e8e8e; }
.c2 { grid-column: 2; } .c3 { grid-column: 3; } .c4 { grid-column: 4; }
.r1 { grid-row: 1; } .r2 { grid-row: 2; } .r3 { grid-row: 3; } .r4 { grid-row: 4; } .r34 { grid-row: 3 / 5; }
.r5 { grid-row: 5; } .r6 { grid-row: 6; } .r8 { grid-row: 8; } .r10 { grid-row: 10; }
.cap { display: flex; align-items: center; padding-left: 2px; }
.xf-center { grid-column: 1; grid-row: 1; padding-left: 24px; font-size: 9.5px; letter-spacing: 0; display: flex; align-items: center; }
.xf-anchor { grid-column: 1; grid-row: 2 / 5; display: flex; padding-left: 2px; margin-top: -1px; }
.vert { writing-mode: vertical-rl; transform: rotate(180deg); font-size: 9.5px; letter-spacing: 0; width: 13px; text-align: center; }
.anchor-box { width: 49px; height: 49px; background: #cdcdcd; border: 1px solid #8a8a8a; padding: 6px; }
.anchor-in { position: relative; width: 35px; height: 35px; border: 1px solid #888; }
.ah { position: absolute; left: 0; right: 0; top: 16px; height: 1px; background: #a01428; }
.av { position: absolute; top: 0; bottom: 0; left: 16px; width: 1px; background: #a01428; }
.ac { position: absolute; left: 8px; top: 8px; width: 17px; height: 17px; border: 1px solid #333; }
.ad { position: absolute; left: 15px; top: 15px; width: 3px; height: 3px; background: #8a1e2c; }
.xf-left { grid-column: 1; padding-left: 6px; display: flex; align-items: center; gap: 2px; }
.lbl-pivot { padding-left: 15px; }
.lf { display: flex; align-items: center; justify-content: space-between; }
.lf span { padding-left: 2px; }
.lf .field { width: 65px; }
.rbtns { display: flex; justify-self: end; align-self: center; width: 51px; height: 18px; margin-right: 0; border: 1px solid #777; border-radius: 3px; background: linear-gradient(#e6e6e6, #c9c9c9); }
.rb { flex: 1; display: flex; align-items: center; justify-content: center; }
.rb:first-child { border-right: 1px solid #444; }
.dash { width: 10px; height: 10px; border: 1px dashed #444; display: block; }
.add-wrap { padding: 10px 0 0 78px; }
.add { width: 230px; height: 23px; border: 1px solid #666; border-radius: 3px; background: linear-gradient(#ececec, #c6c6c6); font-size: 12px; }

.status { height: 22px; flex: none; background: #a2a2a2; border-top: 1px solid #7c7c7c; display: flex; align-items: center; gap: 3px; padding: 1px 0 0 3px; font-size: 11px; }
.warn { width: 14px; height: 14px; }

.taskbar { flex: 1; background: #0d0d0d; display: flex; color: #fff; letter-spacing: 0; font-family: "Open Sans", sans-serif; font-size: 12px; }
.tb { width: 49px; flex: none; display: flex; align-items: center; justify-content: center; border-bottom: 2px solid transparent; border-top: 2px solid transparent; }
.tb-run { border-bottom-color: #b06a70; }
.tb-sel { background: #474747; border-bottom-color: #b06a70; width: 48px; }
.i16 { width: 16px; height: 16px; }
.i20 { width: 20px; height: 20px; }
.i22 { width: 22px; height: 22px; }
.i24 { width: 24px; height: 24px; }
.white { color: #fff; }
.epic { width: 20px; height: 28px; padding-top: 3px; background: #111; border: 1px solid #222; display: flex; flex-direction: column; align-items: center; font-family: "Liberation Sans", sans-serif; font-weight: 700; font-size: 8px; line-height: 9px; color: #fff; }
.epic small { font-size: 4px; line-height: 6px; }
.ubox { width: 20px; height: 22px; background: #fff; color: #222; display: flex; align-items: center; justify-content: center; }
.ubox svg { width: 14px; height: 14px; }
.tray { display: flex; align-items: center; flex: 1; min-width: 0; padding-left: 470px; }
.t-caret { width: 12px; height: 7px; }
.t-cloud { width: 17px; height: 12px; margin-left: 19px; }
.t-wifi { width: 13px; height: 13px; margin-left: 19px; }
.t-vol { width: 17px; height: 14px; margin-left: 16px; }
.t-bat { width: 16px; height: 11px; margin-left: 18px; }
.t-eng { margin-left: 5px; width: 30px; text-align: center; }
.t-clock { display: flex; flex-direction: column; align-items: center; width: 76px; margin-left: 1px; line-height: 18px; }
.t-note { width: 16px; height: 16px; margin-left: 2px; }

.menu { position: absolute; background: #f2f2f2; border: 1px solid #c8c8c8; box-shadow: 2px 2px 3px rgba(0,0,0,.45); font-family: "Open Sans", sans-serif; font-size: 11.5px; letter-spacing: -.1px; color: #1a1a1a; }
.ctx { left: 721px; top: 229px; width: 160px; height: 357px; padding: 2px 5px 0 1px; }
.submenu { left: 875px; top: 273px; width: 160px; height: 291px; padding: 1px 2px 0 2px; }
.mi { height: 22px; display: flex; align-items: center; padding: 0 0 2px 32px; position: relative; }
.submenu .mi { padding-left: 32px; }
.mi.hl { background: #90c8f6; }
.mi.dis { color: #6d6d6d; }
.mi.sub::after { content: ""; position: absolute; right: 8px; top: 8px; width: 5px; height: 5px; border-top: 1px solid #333; border-right: 1px solid #333; transform: rotate(45deg); }
.menu hr { margin: 3px 0 3px 33px; height: 1px; border: 0; background: #ccc; }
```
